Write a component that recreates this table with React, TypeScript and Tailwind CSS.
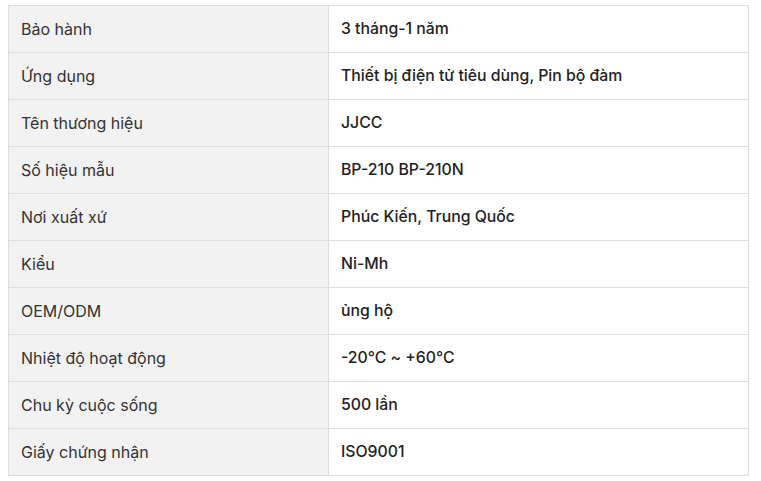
const rows: [string, string][] = [
  ["Bảo hành", "3 tháng-1 năm"],
  ["Ứng dụng", "Thiết bị điện tử tiêu dùng, Pin bộ đàm"],
  ["Tên thương hiệu", "JJCC"],
  ["Số hiệu mẫu", "BP-210 BP-210N"],
  ["Nơi xuất xứ", "Phúc Kiến, Trung Quốc"],
  ["Kiểu", "Ni-Mh"],
  ["OEM/ODM", "ủng hộ"],
  ["Nhiệt độ hoạt động", "-20℃ ~ +60℃"],
  ["Chu kỳ cuộc sống", "500 lần"],
  ["Giấy chứng nhận", "ISO9001"],
];

export default function App() {
  return (
    <div className="bg-white pl-[8px] pt-[5px] font-['Inter',sans-serif]">
      <table className="w-[741px] border-collapse text-[16px]">
        <tbody>
          {rows.map(([k, v]) => (
            <tr key={k} className="h-[47px]">
              <td className="w-[320px] border border-[#dddddd] bg-[#f2f2f2] px-3 text-[#333333]">{k}</td>
              <td className="border border-[#dddddd] px-3 text-[15.8px] font-medium text-[#222222]">{v}</td>
            </tr>
          ))}
        </tbody>
      </table>
    </div>
  );
}
